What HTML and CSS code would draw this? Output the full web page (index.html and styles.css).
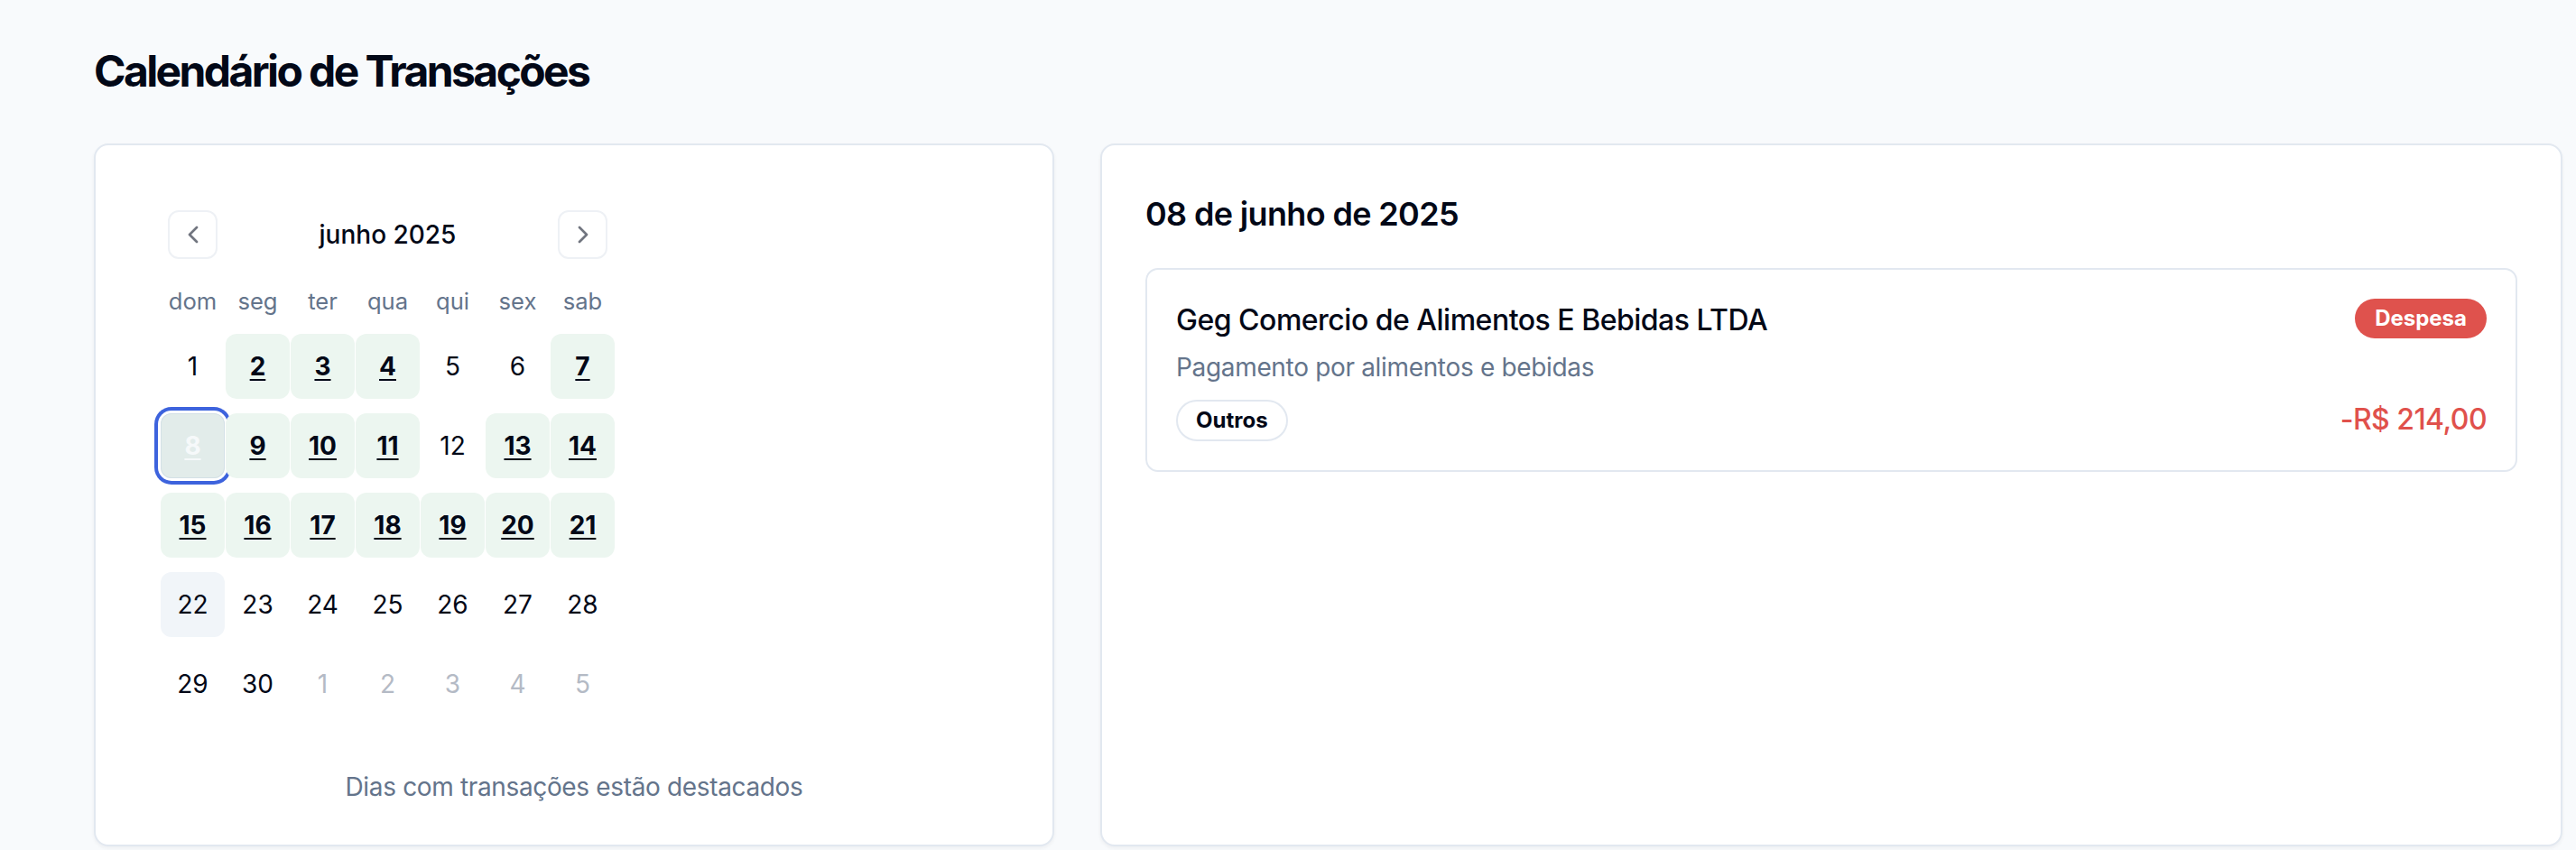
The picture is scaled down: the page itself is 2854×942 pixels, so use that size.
FILE: index.html
```html
<!DOCTYPE html>
<html lang="pt-BR">
<head>
<meta charset="utf-8">
<title>Calendário de Transações</title>
<link rel="stylesheet" href="styles.css">
</head>
<body>
<div class="page">
  <h1 class="page-title">Calendário de Transações</h1>
  <div class="layout">
    <section class="card cal-card">
      <div class="calendar">
        <div class="caption">
          <button class="nav-btn nav-prev" aria-label="anterior">
            <svg viewBox="0 0 24 24" width="32" height="32" fill="none" stroke="currentColor" stroke-width="2" stroke-linecap="round" stroke-linejoin="round"><path d="m15 18-6-6 6-6"/></svg>
          </button>
          <span class="caption-label">junho 2025</span>
          <button class="nav-btn nav-next" aria-label="próximo">
            <svg viewBox="0 0 24 24" width="32" height="32" fill="none" stroke="currentColor" stroke-width="2" stroke-linecap="round" stroke-linejoin="round"><path d="m9 18 6-6-6-6"/></svg>
          </button>
        </div>
        <div class="weekdays">
          <span>dom</span><span>seg</span><span>ter</span><span>qua</span><span>qui</span><span>sex</span><span>sab</span>
        </div>
        <div class="days">
          <span class="day">1</span>
          <span class="day has">2</span>
          <span class="day has">3</span>
          <span class="day has">4</span>
          <span class="day">5</span>
          <span class="day">6</span>
          <span class="day has">7</span>

          <span class="day has selected">8</span>
          <span class="day has">9</span>
          <span class="day has">10</span>
          <span class="day has">11</span>
          <span class="day">12</span>
          <span class="day has">13</span>
          <span class="day has">14</span>

          <span class="day has">15</span>
          <span class="day has">16</span>
          <span class="day has">17</span>
          <span class="day has">18</span>
          <span class="day has">19</span>
          <span class="day has">20</span>
          <span class="day has">21</span>

          <span class="day today">22</span>
          <span class="day">23</span>
          <span class="day">24</span>
          <span class="day">25</span>
          <span class="day">26</span>
          <span class="day">27</span>
          <span class="day">28</span>

          <span class="day">29</span>
          <span class="day">30</span>
          <span class="day outside">1</span>
          <span class="day outside">2</span>
          <span class="day outside">3</span>
          <span class="day outside">4</span>
          <span class="day outside">5</span>
        </div>
      </div>
      <p class="cal-note">Dias com transações estão destacados</p>
    </section>

    <section class="card detail-card">
      <h2 class="detail-title">08 de junho de 2025</h2>
      <div class="tx">
        <div class="tx-main">
          <div class="tx-name">Geg Comercio de Alimentos E Bebidas LTDA</div>
          <div class="tx-desc">Pagamento por alimentos e bebidas</div>
          <span class="tag">Outros</span>
        </div>
        <div class="tx-side">
          <span class="type-badge">Despesa</span>
          <span class="amount">-R$ 214,00</span>
        </div>
      </div>
    </section>
  </div>
</div>
</body>
</html>
```

FILE: styles.css
```css
* {
  box-sizing: border-box;
}

html, body {
  margin: 0;
  padding: 0;
  background: #f8fafc;
  font-family: Inter, "Noto Sans", "Liberation Sans", sans-serif;
  color: #020817;
}

.page {
  padding: 47px 15px 0 104px;
  height: 942px;
  overflow: hidden;
}

.page-title {
  margin: 0 0 48px 0;
  font-size: 48px;
  line-height: 64px;
  font-weight: 700;
  letter-spacing: -2.6px;
}

.layout {
  display: grid;
  grid-template-columns: 1064px 1620px;
  column-gap: 51px;
}

.card {
  background: #ffffff;
  border: 2px solid #e2e8f0;
  border-radius: 16px;
  box-shadow: 0 2px 4px rgba(15, 23, 42, 0.05);
  padding: 48px;
  height: 779px;
}

/* Calendar */
.calendar {
  width: 551px;
  padding: 24px;
}

.caption {
  position: relative;
  height: 54px;
  display: flex;
  align-items: center;
  justify-content: center;
}

.caption-label {
  font-size: 28px;
  line-height: 40px;
  font-weight: 500;
}

.nav-btn {
  position: absolute;
  top: 0;
  width: 55px;
  height: 54px;
  border: 2px solid #eef1f5;
  border-radius: 12px;
  background: #ffffff;
  color: #71757f;
  display: flex;
  align-items: center;
  justify-content: center;
  padding: 0;
}

.nav-prev {
  left: 8px;
}

.nav-next {
  right: 8px;
}

.weekdays {
  margin-top: 25px;
  display: grid;
  grid-template-columns: repeat(7, 71px);
  column-gap: 1px;
  height: 44px;
  align-items: center;
}

.weekdays span {
  text-align: center;
  font-size: 25.6px;
  line-height: 44px;
  color: #64748b;
}

.days {
  margin-top: 14px;
  display: grid;
  grid-template-columns: repeat(7, 71px);
  grid-auto-rows: 72px;
  column-gap: 1px;
  row-gap: 16px;
}

.day {
  display: flex;
  align-items: center;
  justify-content: center;
  font-size: 28px;
  border-radius: 12px;
  color: #020817;
}

.day.has {
  background: #ecf6f0;
  font-weight: 700;
  text-decoration: underline;
  text-decoration-thickness: 2px;
  text-underline-offset: 4px;
}

.day.selected {
  background: #e2ecea;
  color: #f6f9fa;
  box-shadow: inset 0 0 0 1px #d3e0e6, 0 0 0 3px #ffffff, 0 0 0 7px #3d63dd;
}

.day.today {
  background: #f1f5f9;
}

.day.outside {
  color: #b4bac5;
}

.cal-note {
  margin: 34px 0 0 0;
  text-align: center;
  font-size: 28px;
  line-height: 40px;
  color: #64748b;
  letter-spacing: -0.35px;
}

/* Detail */
.detail-title {
  margin: 0 0 32px 0;
  font-size: 36px;
  line-height: 56px;
  font-weight: 600;
  letter-spacing: -0.65px;
}

.tx {
  border: 2px solid #e2e8f0;
  border-radius: 14px;
  padding: 32px;
  display: flex;
  justify-content: space-between;
}

.tx-main {
  display: flex;
  flex-direction: column;
  align-items: flex-start;
}

.tx-name {
  font-size: 32px;
  line-height: 48px;
  font-weight: 500;
  letter-spacing: -0.5px;
}

.tx-desc {
  margin-top: 8px;
  font-size: 28px;
  line-height: 40px;
  color: #64748b;
  letter-spacing: -0.33px;
}

.tag {
  margin-top: 16px;
  border: 2px solid #e2e8f0;
  border-radius: 999px;
  padding: 5px 20px;
  font-size: 24px;
  line-height: 32px;
  font-weight: 700;
}

.tx-side {
  display: flex;
  flex-direction: column;
  align-items: flex-end;
  justify-content: space-between;
}

.type-badge {
  background: #df524d;
  color: #ffffff;
  border-radius: 999px;
  padding: 6px 22px;
  font-size: 24px;
  line-height: 32px;
  font-weight: 700;
}

.amount {
  font-size: 32px;
  line-height: 48px;
  font-weight: 500;
  color: #e0514c;
  letter-spacing: -0.55px;
}
```
